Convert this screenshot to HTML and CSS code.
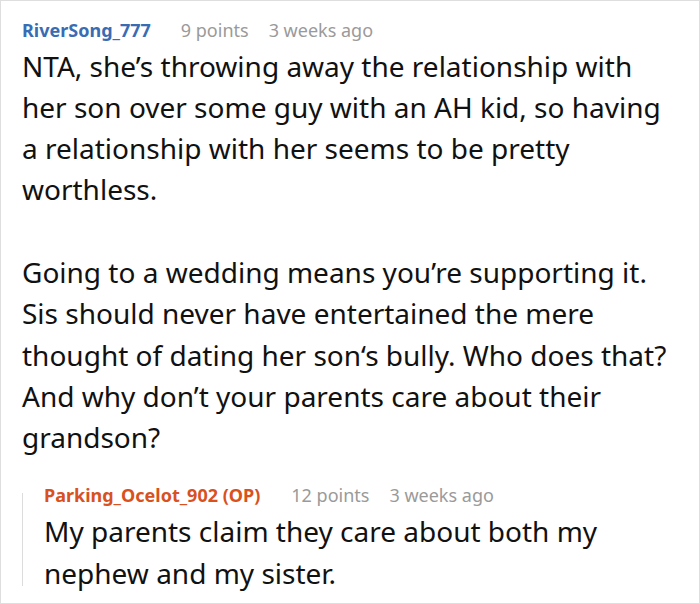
FILE: index.html
```html
<!DOCTYPE html>
<html>
<head>
<meta charset="utf-8">
<link rel="stylesheet" href="styles.css">
</head>
<body>
<div class="frame">
  <div class="comment">
    <div class="meta">
      <span class="user">RiverSong_777</span>
      <span class="info">9 points</span>
      <span class="info">3 weeks ago</span>
    </div>
    <div class="body main">
      <p>NTA, she’s throwing away the relationship with her son over some guy with an AH kid, so having a relationship with her seems to be pretty worthless.</p>
      <p>Going to a wedding means you’re supporting it. Sis should never have entertained the mere thought of dating her son‘s bully. Who does that? And why don’t your parents care about their grandson?</p>
    </div>
    <div class="reply">
      <div class="meta">
        <span class="user op">Parking_Ocelot_902 (OP)</span>
        <span class="info">12 points</span>
        <span class="info">3 weeks ago</span>
      </div>
      <div class="body">
        <p>My parents claim they care about both my nephew and my sister.</p>
      </div>
    </div>
  </div>
</div>
</body>
</html>
```
FILE: styles.css
```css
html, body {
  margin: 0;
  padding: 0;
  background: #fff;
}
.frame {
  box-sizing: border-box;
  width: 700px;
  height: 604px;
  border: 1px solid #dedede;
  overflow: hidden;
  font-family: "Noto Sans", "Open Sans", sans-serif;
  color: #111;
}
.comment {
  padding: 16px 21px 0 21px;
}
.meta {
  display: flex;
  align-items: baseline;
  font-size: 18px;
  line-height: 26px;
}
.user {
  font-weight: bold;
  color: #3a6cb4;
  margin-right: 30px;
}
.user.op {
  color: #d8511e;
  margin-right: 31px;
}
.info {
  color: #9a9a9a;
  margin-right: 20px;
}
.body {
  font-size: 28px;
  line-height: 41.3px;
  padding-right: 10px;
}
.body p {
  margin: 0;
}
.main {
  margin-top: 2.5px;
}
.main p + p {
  margin-top: 41.3px;
}
.reply {
  position: relative;
  margin-top: 23.5px;
  padding-left: 22px;
}
.reply::before {
  content: "";
  position: absolute;
  left: 0;
  top: 11px;
  bottom: 8px;
  width: 1px;
  background: #dcdcdc;
}
.reply .body {
  margin-top: 3.5px;
}
```
